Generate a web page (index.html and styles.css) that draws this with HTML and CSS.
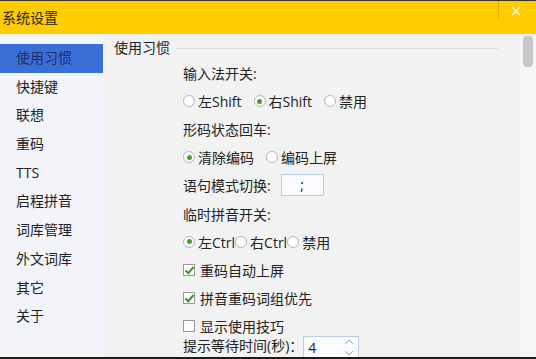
FILE: index.html
```html
<!DOCTYPE html>
<html lang="zh-CN">
<head>
    <meta charset="UTF-8">
    <title>系统设置</title>
    <link rel="stylesheet" href="styles.css">
</head>
<body>

<div class="window">
    <div class="titlebar">
        <span class="title">系统设置</span>
        <span class="sep"></span>
        <span class="close">×</span>
    </div>

    <div class="main">
        <ul class="sidebar">
            <li class="active">使用习惯</li>
            <li>快捷键</li>
            <li>联想</li>
            <li>重码</li>
            <li>TTS</li>
            <li>启程拼音</li>
            <li>词库管理</li>
            <li>外文词库</li>
            <li>其它</li>
            <li>关于</li>
        </ul>

        <div class="content">
            <div class="group-title">
                <span>使用习惯</span>
                <span class="line"></span>
            </div>

            <div class="options">
                <div class="row">输入法开关:</div>
                <div class="row">
                    <span class="radio"></span><span class="gap">左Shift</span>
                    <span class="radio on"></span><span class="gap">右Shift</span>
                    <span class="radio"></span><span>禁用</span>
                </div>
                <div class="row">形码状态回车:</div>
                <div class="row">
                    <span class="radio on"></span><span class="gap">清除编码</span>
                    <span class="radio"></span><span>编码上屏</span>
                </div>
                <div class="row">
                    <span>语句模式切换:</span>
                    <span class="textbox">;</span>
                </div>
                <div class="row">临时拼音开关:</div>
                <div class="row">
                    <span class="radio on"></span><span>左Ctrl</span>
                    <span class="radio"></span><span>右Ctrl</span>
                    <span class="radio"></span><span>禁用</span>
                </div>
                <div class="row">
                    <span class="check on"></span><span>重码自动上屏</span>
                </div>
                <div class="row">
                    <span class="check on"></span><span>拼音重码词组优先</span>
                </div>
                <div class="row">
                    <span class="check"></span><span>显示使用技巧</span>
                </div>
                <div class="row last">
                    <span>提示等待时间(秒)：</span>
                    <span class="spinbox">
                        <span>4</span>
                        <svg width="10" height="20" viewBox="0 0 10 20">
                            <path d="M1 6 L5 2 L9 6" fill="none" stroke="#9aa6b4" stroke-width="1"/>
                            <path d="M1 13 L5 17 L9 13" fill="none" stroke="#9aa6b4" stroke-width="1"/>
                        </svg>
                    </span>
                </div>
            </div>
        </div>

        <div class="scrollbar">
            <div class="thumb"></div>
        </div>
    </div>
</div>

</body>
</html>
```

FILE: styles.css
```css
* {
    margin: 0;
    padding: 0;
    box-sizing: border-box;
}

body {
    width: 536px;
    height: 359px;
    overflow: hidden;
    background: #1c1c1c;
    font-family: "Open Sans", "Noto Sans CJK SC", sans-serif;
    font-size: 14px;
    color: #222;
}

.window {
    height: 359px;
    border-top: 1px solid #3a3320;
    border-bottom: 2px solid #1c1c1c;
    display: flex;
    flex-direction: column;
}

/* Title bar */
.titlebar {
    height: 33px;
    background: #ffcc00;
    display: flex;
    align-items: center;
    padding-left: 2px;
    position: relative;
}

.title {
    font-size: 14px;
    color: #2b2410;
    margin-top: -2px;
}

.sep {
    position: absolute;
    left: 498px;
    top: 0;
    width: 1px;
    height: 17px;
    background: #d4ad00;
}

.close {
    position: absolute;
    left: 510px;
    top: 1px;
    font-size: 15px;
    color: #fff8dc;
    font-family: "DejaVu Sans", sans-serif;
}

.main {
    flex: 1;
    display: flex;
    overflow: hidden;
}

/* Left navigation */
.sidebar {
    width: 104px;
    background: #f2f4fa;
    list-style: none;
    padding-top: 10px;
}

.sidebar li {
    height: 28.7px;
    line-height: 28px;
    padding-left: 16px;
    color: #222;
}

.sidebar li.active {
    background: #3a6fd8;
    color: #1d2d63;
    margin-right: 1px;
}

/* Right panel */
.content {
    flex: 1;
    background: #f2f2f2;
    padding: 3px 0 0 10px;
}

.group-title {
    display: flex;
    align-items: center;
    height: 20px;
    padding-right: 22px;
}

.group-title .line {
    flex: 1;
    height: 1px;
    background: #dcdcd6;
    margin: 3px 0 0 6px;
}

.options {
    padding-left: 69px;
    padding-top: 2px;
}

.row {
    height: 28.1px;
    display: flex;
    align-items: center;
    white-space: nowrap;
}

.row.last {
    height: 22px;
    margin-top: -6px;
}

.gap {
    margin-right: 12px;
}

.radio {
    width: 12px;
    height: 12px;
    border: 1px solid #b4b4b4;
    border-radius: 50%;
    background: #fff;
    margin-right: 3px;
    display: flex;
    align-items: center;
    justify-content: center;
}

.radio.on::after {
    content: "";
    width: 5px;
    height: 5px;
    border-radius: 50%;
    background: #4c9a2e;
}

.check {
    width: 12px;
    height: 12px;
    border: 1px solid #9a9a9a;
    background: #fff;
    margin-right: 5px;
    position: relative;
}

.check.on::after {
    content: "";
    position: absolute;
    left: 3px;
    top: 0px;
    width: 3px;
    height: 7px;
    border: solid #3d8f2a;
    border-width: 0 2px 2px 0;
    transform: rotate(40deg);
}

.textbox {
    width: 43px;
    height: 22px;
    margin-left: 10px;
    background: #f9fbfe;
    border: 1px solid #b8cde3;
    text-align: center;
    line-height: 20px;
}

.spinbox {
    width: 56px;
    height: 24px;
    margin-top: 6px;
    background: #f9fbfe;
    border: 1px solid #b8cde3;
    display: flex;
    align-items: center;
    justify-content: space-between;
    padding: 0 4px;
}

/* Scrollbar */
.scrollbar {
    width: 16px;
    background: #f6f6f8;
    padding: 2px 3px 0 3px;
}

.thumb {
    height: 31px;
    background: #c6c6c8;
    border-radius: 4px;
}
```
